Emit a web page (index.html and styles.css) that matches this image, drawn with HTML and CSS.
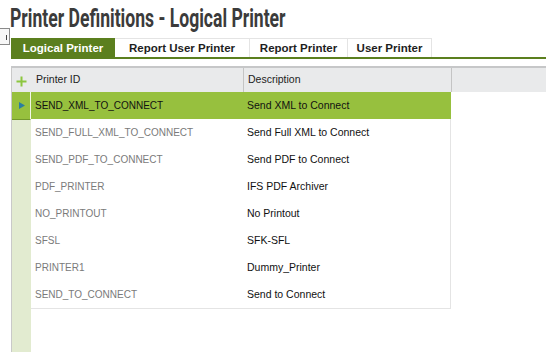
FILE: index.html
```html
<!DOCTYPE html>
<html lang="en">
  <head>
    <meta charset="UTF-8" />
    <meta name="viewport" content="width=device-width, initial-scale=1.0" />
    <title>Printer Definitions - Logical Printer</title>

    <link rel="stylesheet" href="styles.css">
  </head>
  <body>
    <div class="handle"><span></span></div>

    <div class="page">
      <h1 class="title">Printer Definitions - Logical Printer</h1>

      <div class="tabs">
        <div class="tab active">Logical Printer</div>
        <div class="tab report-user">Report User Printer</div>
        <div class="tab report">Report Printer</div>
        <div class="tab user">User Printer</div>
      </div>

      <div class="grid">
        <div class="grid-head">
          <div class="gutter">
            <svg width="11" height="11" viewBox="0 0 11 11">
              <path d="M5.5 0.5v10M0.5 5.5h10" stroke="#8cc63f" stroke-width="2" />
            </svg>
          </div>
          <div class="col">Printer ID</div>
          <div class="col">Description</div>
          <div class="col rest"></div>
        </div>

        <div class="grid-body">
          <div class="row selected">
            <div class="gutter">
              <svg width="6" height="7" viewBox="0 0 6 7">
                <path d="M0 0L6 3.5L0 7Z" fill="#2b7ea1" />
              </svg>
            </div>
            <div class="cell id">SEND_XML_TO_CONNECT</div>
            <div class="cell">Send XML to Connect</div>
          </div>
          <div class="row">
            <div class="gutter"></div>
            <div class="cell id">SEND_FULL_XML_TO_CONNECT</div>
            <div class="cell">Send Full XML to Connect</div>
          </div>
          <div class="row">
            <div class="gutter"></div>
            <div class="cell id">SEND_PDF_TO_CONNECT</div>
            <div class="cell">Send PDF to Connect</div>
          </div>
          <div class="row">
            <div class="gutter"></div>
            <div class="cell id">PDF_PRINTER</div>
            <div class="cell">IFS PDF Archiver</div>
          </div>
          <div class="row">
            <div class="gutter"></div>
            <div class="cell id">NO_PRINTOUT</div>
            <div class="cell">No Printout</div>
          </div>
          <div class="row">
            <div class="gutter"></div>
            <div class="cell id">SFSL</div>
            <div class="cell">SFK-SFL</div>
          </div>
          <div class="row">
            <div class="gutter"></div>
            <div class="cell id">PRINTER1</div>
            <div class="cell">Dummy_Printer</div>
          </div>
          <div class="row">
            <div class="gutter"></div>
            <div class="cell id">SEND_TO_CONNECT</div>
            <div class="cell">Send to Connect</div>
          </div>
        </div>
      </div>
    </div>
  </body>
</html>
```

FILE: styles.css
```css
*,
*::before,
*::after {
  box-sizing: border-box;
  margin: 0;
  padding: 0;
}

body {
  height: 100vh;
  overflow: hidden;
  background: #fff;
  font-family: "Liberation Sans", Arial, sans-serif;
}

/* collapsed side panel handle */
.handle {
  position: absolute;
  z-index: 1;
  left: -4px;
  top: 28px;
  width: 14px;
  height: 17px;
  border: 1px solid #8a8a8a;
  background: #f7f7f7;
}

.handle span {
  position: absolute;
  left: 9px;
  top: 6px;
  width: 1px;
  height: 5px;
  background: #444;
}

.page {
  height: 100%;
  padding-left: 11px;
  display: flex;
  flex-direction: column;
}

.title {
  height: 38px;
  padding-top: 5px;
  font-family: Roboto, sans-serif;
  font-weight: 700;
  font-size: 25px;
  line-height: 28px;
  color: #3b3b3b;
  white-space: nowrap;
  transform: scaleX(0.703);
  transform-origin: left top;
  margin-left: -1px;
}

.tabs {
  display: flex;
  height: 21px;
  border-bottom: 2px solid #5b7f1e;
}

.tab {
  height: 19px;
  border-top: 1px solid #e4e4e4;
  border-right: 1px solid #e4e4e4;
  font-size: 11.5px;
  font-weight: 700;
  line-height: 18px;
  text-align: center;
  color: #1e1e1e;
  white-space: nowrap;
}

.tab.active {
  width: 104px;
  padding-left: 1px;
  background: #5b7f1e;
  border-color: #5b7f1e;
  color: #fff;
}

.tab.report-user {
  width: 135px;
}

.tab.report {
  width: 98px;
}

.tab.user {
  width: 84px;
}

.grid {
  flex: 1;
  margin-top: 7px;
  display: flex;
  flex-direction: column;
  font-size: 10.5px;
}

.grid-head {
  display: grid;
  grid-template-columns: 20px 212px 208px 1fr;
  height: 26px;
  background: #e9eaeb;
  border-top: 2px solid #c6c7c8;
  border-left: 1px solid #c9c9c9;
}

.grid-head .gutter {
  display: grid;
  place-items: center;
  padding-top: 2px;
  padding-right: 1px;
}

.col {
  padding-left: 4px;
  line-height: 22px;
  color: #222;
  border-right: 1px solid #c4c4c4;
}

.col.rest {
  border-right: none;
}

.grid-body {
  flex: 1;
  border-left: 1px solid #c9c9c9;
  background: linear-gradient(to right, #e2ebd0 19px, #fff 19px);
}

.row {
  display: grid;
  grid-template-columns: 19px 212px 208px;
  height: 27px;
}

.row .gutter {
  display: grid;
  place-items: center;
}

.cell {
  line-height: 27px;
  padding-left: 4px;
  background: #fff;
  border-bottom: 1px solid #e4e4e4;
  color: #111;
  white-space: nowrap;
}

.cell:last-child {
  border-right: 1px solid #e4e4e4;
}

.cell.id {
  font-size: 10px;
  color: #7a7a7a;
}

.row.selected .gutter,
.row.selected .cell {
  background: #97c03e;
  border-bottom: 1px solid #73982d;
}

.row.selected .gutter {
  border-right: 1px solid #f2f7e8;
  padding-left: 1px;
}

.row.selected .cell:last-child {
  border-right: none;
}

.row.selected .cell.id {
  color: #111;
}
```
